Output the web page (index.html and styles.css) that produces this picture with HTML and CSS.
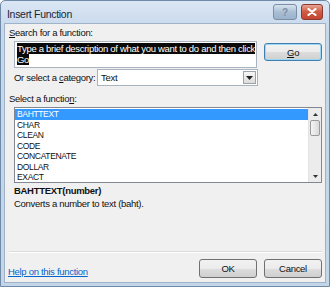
FILE: index.html
```html
<!DOCTYPE html>
<html>
<head>
<meta charset="utf-8">
<link rel="stylesheet" href="styles.css">
</head>
<body>
<div class="window">
  <div class="titlebar">
    <span class="title">Insert Function</span>
    <div class="caption-btns">
      <div class="cbtn help"><span>?</span></div>
      <div class="cbtn close">
        <svg width="10" height="8" viewBox="0 0 10 8"><path d="M1.5 1 L8.5 7 M8.5 1 L1.5 7" stroke="#fff" stroke-width="2.2" stroke-linecap="round"/></svg>
      </div>
    </div>
  </div>
  <div class="client">
    <div class="label lbl-search"><u>S</u>earch for a function:</div>
    <div class="row search-row">
      <div class="textbox"><span class="sel">Type a brief description of what you want to do and then click</span><br><span class="sel">Go</span></div>
      <div class="btn go"><u>G</u>o</div>
    </div>
    <div class="row cat-row">
      <span class="label">Or select a <u>c</u>ategory:</span>
      <div class="combo"><span class="combo-text">Text</span><div class="combo-arrow"><svg width="7" height="4" viewBox="0 0 7 4"><path d="M0 0 H7 L3.5 4 Z" fill="#222"/></svg></div></div>
    </div>
    <div class="label lbl-select">Select a functio<u>n</u>:</div>
    <div class="listbox">
      <div class="items">
        <div class="item selected">BAHTTEXT</div>
        <div class="item">CHAR</div>
        <div class="item">CLEAN</div>
        <div class="item">CODE</div>
        <div class="item">CONCATENATE</div>
        <div class="item">DOLLAR</div>
        <div class="item">EXACT</div>
      </div>
      <div class="scrollbar">
        <div class="sb-arrow"><svg width="5" height="3" viewBox="0 0 5 3"><path d="M0 3 L2.5 0 L5 3Z" fill="#333"/></svg></div>
        <div class="sb-thumb"></div>
        <div class="sb-track"></div>
        <div class="sb-arrow"><svg width="5" height="3" viewBox="0 0 5 3"><path d="M0 0 L5 0 L2.5 3Z" fill="#333"/></svg></div>
      </div>
    </div>
    <div class="sig">BAHTTEXT(number)</div>
    <div class="desc">Converts a number to text (baht).</div>
    <div class="spacer"></div>
    <div class="separator"></div>
    <div class="row footer">
      <a class="link">Help on this function</a>
      <div class="btn ok">OK</div>
      <div class="btn cancel">Cancel</div>
    </div>
  </div>
</div>
</body>
</html>
```
FILE: styles.css
```css
html, body {
  margin: 0;
  padding: 0;
  background: #ffffff;
}
body {
  font-family: "Liberation Sans", Arial, sans-serif;
  font-size: 9.5px;
  letter-spacing: -0.3px;
  color: #111;
}
.window {
  width: 330px;
  height: 287px;
  box-sizing: border-box;
  border: 1px solid #6f8aa6;
  border-radius: 5px 5px 0 0;
  background: linear-gradient(#dae6f3, #c6d8ec 30px, #c3d5e9);
  display: flex;
  flex-direction: column;
  padding: 0 3px 3px 3px;
}
.titlebar {
  height: 22px;
  display: flex;
  align-items: center;
  padding-left: 3px;
}
.title {
  font-size: 10.5px;
  color: #1a2634;
  flex: 1;
  margin-top: 3px;
}
.caption-btns {
  display: flex;
  gap: 4px;
  align-self: flex-start;
  margin-top: 3px;
  margin-right: 3px;
}
.cbtn {
  height: 14px;
  border: 1px solid #7a8ea6;
  border-radius: 3px;
  display: flex;
  align-items: center;
  justify-content: center;
}
.help {
  width: 22px;
  background: linear-gradient(#d7e3ef, #aabfd5 50%, #9ab2cb);
  color: #7d8fa3;
  font-size: 10px;
  font-weight: bold;
}
.close {
  width: 20px;
  border-color: #8b3a2f;
  background: linear-gradient(#e8a493, #cf5a41 50%, #c44630);
}
.client {
  flex: 1;
  background: #f0f0f0;
  border: 1px solid #9fb2c7;
  display: flex;
  flex-direction: column;
  padding: 3px 3px 4px 3px;
}
.label {
  line-height: 12px;
  white-space: nowrap;
}
.lbl-search {
  margin-left: 1px;
}
.row {
  display: flex;
}
.search-row {
  margin-top: 2px;
  margin-left: 6px;
  gap: 7px;
}
.textbox {
  width: 240px;
  height: 24px;
  background: #fff;
  border: 1px solid #aab4bf;
  padding: 1px 0 0 2px;
  box-sizing: content-box;
  line-height: 11px;
  white-space: nowrap;
  overflow: hidden;
}
.sel {
  background: #0a0a0a;
  color: #fff;
}
.btn {
  height: 17px;
  border: 1px solid #707070;
  border-radius: 3px;
  background: linear-gradient(#f2f2f2, #ebebeb 50%, #dddddd 51%, #cfcfcf);
  display: flex;
  align-items: center;
  justify-content: center;
  box-sizing: border-box;
}
.go {
  width: 58px;
  height: 18px;
  margin-top: 2px;
  border-color: #3c7fb1;
  box-shadow: inset 0 0 0 1px #9bd6f4;
}
.cat-row {
  margin-top: 1px;
  margin-left: 6px;
  align-items: center;
}
.cat-row .label {
  width: 83px;
}
.combo {
  width: 161px;
  height: 17px;
  box-sizing: border-box;
  background: #fff;
  border: 1px solid #aab4bf;
  display: flex;
  align-items: center;
}
.combo-text {
  flex: 1;
  padding-left: 3px;
}
.combo-arrow {
  width: 13px;
  height: 13px;
  margin-right: 1px;
  border: 1px solid #9aa3ad;
  box-sizing: border-box;
  background: linear-gradient(#f6f6f6, #dcdcdc);
  display: flex;
  align-items: center;
  justify-content: center;
}
.lbl-select {
  margin-top: 7px;
  margin-left: 1px;
}
.listbox {
  margin-top: 2px;
  margin-left: 6px;
  height: 76px;
  box-sizing: border-box;
  background: #fff;
  border: 1px solid #828790;
  display: flex;
  overflow: hidden;
}
.items {
  flex: 1;
  padding-top: 1px;
}
.item {
  height: 10.5px;
  line-height: 10.5px;
  font-size: 8.5px;
  padding-left: 2px;
  letter-spacing: -0.35px;
}
.item.selected {
  background: #3399ff;
  color: #fff;
}
.scrollbar {
  width: 12px;
  background: #ececec;
  border-left: 1px solid #e3e3e3;
  display: flex;
  flex-direction: column;
}
.sb-arrow {
  height: 12px;
  display: flex;
  align-items: center;
  justify-content: center;
}
.sb-thumb {
  height: 14px;
  margin: 0 1px;
  border: 1px solid #9a9a9a;
  border-radius: 2px;
  background: linear-gradient(90deg, #f5f5f5, #dadada);
}
.sb-track {
  flex: 1;
}
.sig {
  margin-top: 1px;
  margin-left: 6px;
  font-weight: bold;
  line-height: 13px;
}
.desc {
  margin-left: 6px;
  line-height: 13px;
}
.spacer {
  flex: 1;
}
.separator {
  height: 1px;
  background: #dcdcdc;
  border-bottom: 1px solid #ffffff;
  margin-left: 1px;
}
.footer {
  margin-top: 6px;
  align-items: center;
  gap: 7px;
}
.link {
  flex: 1;
  color: #0066cc;
  text-decoration: underline;
  margin-top: 5px;
}
.ok, .cancel {
  width: 58px;
  height: 19px;
}
```
